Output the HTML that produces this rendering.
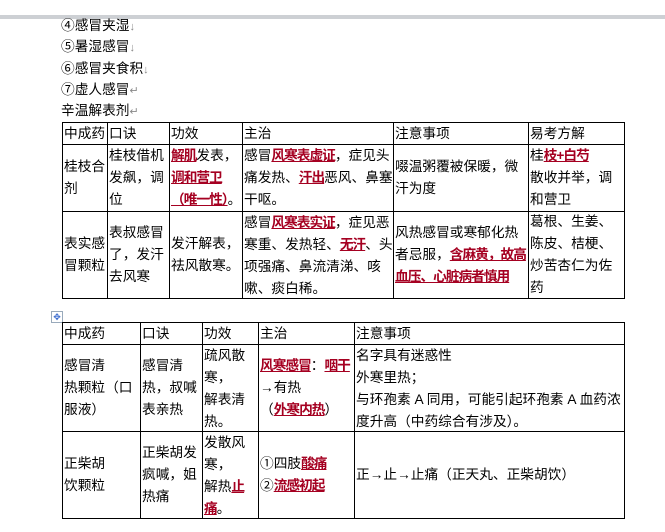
<!DOCTYPE html>
<html><head><meta charset="utf-8"><style>
body{margin:0;width:665px;height:532px;background:#fff;position:relative;overflow:hidden;font-family:"Liberation Sans","Noto Sans CJK SC","WenQuanYi Zen Hei",sans-serif;font-size:13.7px;color:#000}
.bar{position:absolute;left:0;top:15px;width:665px;height:4px;background:#cdd0d4}
.l{position:absolute;left:61px;line-height:21px;white-space:nowrap}
table{position:absolute;border-collapse:collapse;table-layout:fixed}
td{border:1.5px solid #000;padding:0;vertical-align:top}
td>div{overflow:hidden;line-height:22px;padding-left:1px;word-break:break-all;display:flex;flex-direction:column}
td>div>span.t{display:block}
.r{color:#a50021;font-weight:bold;text-decoration:underline;letter-spacing:-1px}
.p{color:#888;font-size:11px}
.h22{height:21px}.h67{height:66px}.h88{height:86px}
.c{justify-content:center}
</style></head><body>
<div class="bar"></div>
<div class="l" style="top:15px">④感冒夹湿<span class="p">↓</span></div>
<div class="l" style="top:36px">⑤暑湿感冒<span class="p">↓</span></div>
<div class="l" style="top:58px">⑥感冒夹食积<span class="p">↓</span></div>
<div class="l" style="top:79px">⑦虚人感冒<span class="p">↵</span></div>
<div class="l" style="top:100px">辛温解表剂<span class="p">↵</span></div>

<table style="left:62px;top:122px;width:562px">
<col style="width:45px"><col style="width:62px"><col style="width:73px"><col style="width:151px"><col style="width:135px"><col style="width:96px">
<tr><td><div class="h22">中成药</div></td><td><div class="h22">口诀</div></td><td><div class="h22">功效</div></td><td><div class="h22">主治</div></td><td><div class="h22">注意事项</div></td><td><div class="h22">易考方解</div></td></tr>
<tr><td><div class="h67 c"><span class="t">桂枝合剂</span></div></td><td><div class="h67"><span class="t">桂枝借机发飙，调位</span></div></td><td><div class="h67"><span class="t"><span class="r">解肌</span>发表，<span class="r">调和营卫（唯一性）</span>。</span></div></td><td><div class="h67"><span class="t">感冒<span class="r">风寒表虚证</span>，症见头痛发热、<span class="r">汗出</span>恶风、鼻塞干呕。</span></div></td><td><div class="h67 c"><span class="t">啜温粥覆被保暖，微汗为度</span></div></td><td><div class="h67"><span class="t">桂<span class="r">枝+白芍</span><br>散收并举，调和营卫</span></div></td></tr>
<tr><td><div class="h88 c"><span class="t">表实感冒颗粒</span></div></td><td><div class="h88 c"><span class="t">表叔感冒了，发汗去风寒</span></div></td><td><div class="h88 c"><span class="t">发汗解表，祛风散寒。</span></div></td><td><div class="h88"><span class="t">感冒<span class="r">风寒表实证</span>，症见恶寒重、发热轻、<span class="r">无汗</span>、头项强痛、鼻流清涕、咳嗽、痰白稀。</span></div></td><td><div class="h88 c"><span class="t">风热感冒或寒郁化热者忌服，<span class="r">含麻黄，故高血压、心脏病者慎用</span></span></div></td><td><div class="h88 c"><span class="t">葛根、生姜、陈皮、桔梗、炒苦杏仁为佐药</span></div></td></tr>
</table>

<div style="position:absolute;left:51px;top:311px;width:10px;height:10px;border:1px solid #9ab;color:#36c;font-size:9px;line-height:10px;text-align:center">✥</div>

<table style="left:62px;top:322px;width:562px">
<col style="width:78px"><col style="width:62px"><col style="width:56px"><col style="width:96px"><col style="width:270px">
<tr><td><div class="h22">中成药</div></td><td><div class="h22">口诀</div></td><td><div class="h22">功效</div></td><td><div class="h22">主治</div></td><td><div class="h22">注意事项</div></td></tr>
<tr><td><div class="h88 c"><span class="t">感冒清<br>热颗粒（口服液）</span></div></td><td><div class="h88 c"><span class="t">感冒清热，叔喊表亲热</span></div></td><td><div class="h88"><span class="t">疏风散寒，<br>解表清热。</span></div></td><td><div class="h88 c" style="white-space:nowrap"><span class="t"><span class="r">风寒感冒</span>：<span class="r">咽干</span><br>→有热<br>（<span class="r">外寒内热</span>）</span></div></td><td><div class="h88"><span class="t">名字具有迷惑性<br>外寒里热；<br>与环孢素 A 同用，可能引起环孢素 A 血药浓度升高（中药综合有涉及）。</span></div></td></tr>
<tr><td><div class="h88 c"><span class="t">正柴胡<br>饮颗粒</span></div></td><td><div class="h88 c"><span class="t">正柴胡发疯喊，姐热痛</span></div></td><td><div class="h88"><span class="t">发散风寒，<br>解热<span class="r">止痛</span>。</span></div></td><td><div class="h88 c"><span class="t">①四肢<span class="r">酸痛</span><br>②<span class="r">流感初起</span></span></div></td><td><div class="h88 c"><span class="t">正→止→止痛（正天丸、正柴胡饮）</span></div></td></tr>
</table>
</body></html>
